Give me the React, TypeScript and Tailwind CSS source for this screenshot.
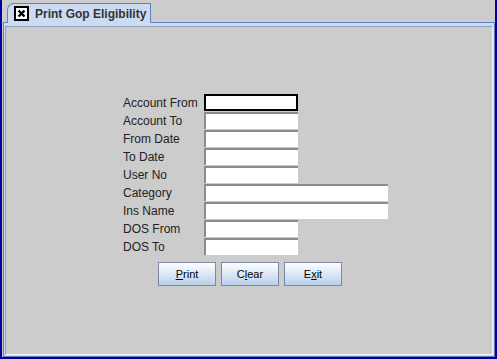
const fields = [
  { label: "Account From", wide: false, focus: true },
  { label: "Account To", wide: false },
  { label: "From Date", wide: false },
  { label: "To Date", wide: false },
  { label: "User No", wide: false },
  { label: "Category", wide: true },
  { label: "Ins Name", wide: true },
  { label: "DOS From", wide: false },
  { label: "DOS To", wide: false },
];

const CloseBox = () => (
  <svg width="15" height="15" viewBox="0 0 15 15" className="shrink-0">
    <rect x="1" y="1" width="13" height="13" fill="white" stroke="black" strokeWidth="2" />
    <path d="M4.5 4.5 L10.5 10.5 M10.5 4.5 L4.5 10.5" stroke="black" strokeWidth="2.4" />
  </svg>
);

const Btn = ({ pre, key1, post }: { pre: string; key1: string; post: string }) => (
  <button className="w-[58px] h-[24px] border border-[#7a8aa6] bg-gradient-to-b from-white to-[#b9d0ea] text-[11px] text-black">
    {pre}
    <span className="underline">{key1}</span>
    {post}
  </button>
);

export default function App() {
  return (
    <div
      className="w-[497px] h-[359px] bg-[#0000a0] px-[2px] pb-[2px] flex"
      style={{ fontFamily: '"Liberation Sans", Arial, sans-serif' }}
    >
      <div className="flex-1 bg-[#cccccc] flex flex-col">
        {/* tab strip */}
        <div className="h-[22px] pl-[5px] pt-[3px] flex items-end">
          <div className="relative h-[20px] w-[144px] border border-b-0 border-[#6382bf] bg-[#ccdaf2] rounded-tl-[7px] flex items-center gap-[6px] pl-[6px] -mb-[1px] z-10">
            <CloseBox />
            <span className="text-[12px] font-bold text-[#333333] leading-none">Print Gop Eligibility</span>
          </div>
        </div>
        {/* content */}
        <div className="flex-1 ml-[1px] border border-[#6382bf] bg-[#ccdaf2] pt-[3px] pl-[1px] pr-[1px] pb-[1px] flex">
          <div className="flex-1 bg-[#cccccc] border-l border-t border-[#8fa0bf] border-r border-r-[#f4f4f4] border-b border-b-[#f4f4f4] pl-[117px] pt-[67px]">
            <div className="flex flex-col">
              {fields.map((f) => (
                <div key={f.label} className="h-[18px] flex items-start">
                  <div className="w-[81px] h-[17px] flex items-center text-[12px] text-[#222222]">{f.label}</div>
                  <div
                    className={`${f.wide ? "w-[184px]" : "w-[94px]"} h-[17px] bg-white ${
                      f.focus ? "border-2 border-black" : "border-t-2 border-l-2 border-[#8c8c8c]"
                    }`}
                  />
                </div>
              ))}
            </div>
            <div className="flex gap-[5px] pl-[35px] mt-[6px]">
              <Btn pre="" key1="P" post="rint" />
              <Btn pre="C" key1="l" post="ear" />
              <Btn pre="E" key1="x" post="it" />
            </div>
          </div>
        </div>
      </div>
    </div>
  );
}
